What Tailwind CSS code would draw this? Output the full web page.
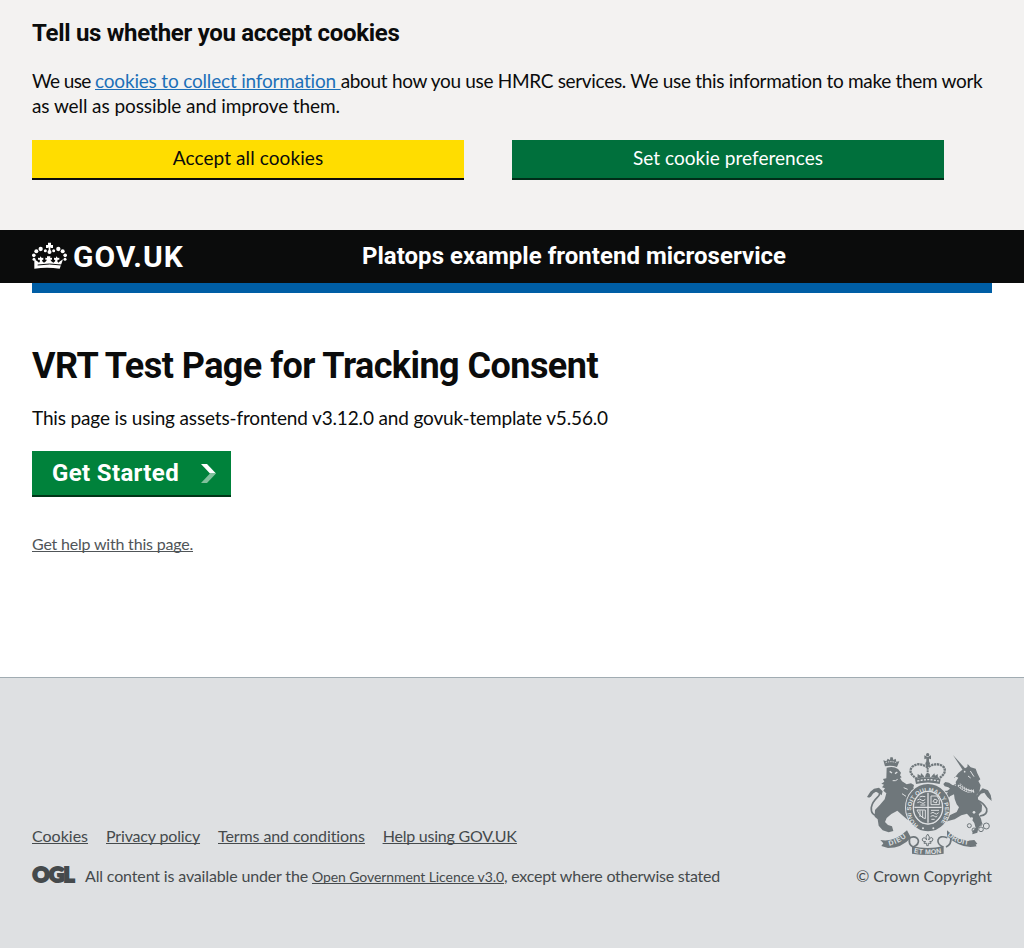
<!DOCTYPE html>
<html lang="en">
<head>
<meta charset="utf-8">
<title>VRT Test Page for Tracking Consent</title>
<script src="https://cdn.jsdelivr.net/npm/@tailwindcss/browser@4"></script>
</head>
<body class="flex h-[948px] flex-col bg-white font-['Lato','Noto_Sans',sans-serif] text-[19px] leading-[25px] text-[#0b0c0c]">
<section class="h-[230px] shrink-0 bg-[#f3f2f1] px-8 pt-[18px]">
  <h2 class="font-['Roboto',sans-serif] text-2xl leading-[30px] font-bold tracking-[-0.302px]">Tell us whether you accept cookies</h2>
  <p class="mt-5 whitespace-nowrap"><span class="tracking-[-0.603px]">We use </span><a href="#" class="tracking-[-0.179px] whitespace-pre text-[#1d70b8] underline decoration-1 underline-offset-[1px] [text-decoration-skip-ink:none]">cookies to collect information </a><span class="tracking-[-0.316px]">about how you use HMRC services. We use this information to make them work</span><br><span class="tracking-[-0.087px]">as well as possible and improve them.</span></p>
  <div class="mt-[22px] flex gap-12">
    <button class="h-10 w-[432px] border-b-2 border-[#0b0c0c] bg-[#ffdd00] pb-0.5 leading-[34px] tracking-[0.092px]">Accept all cookies</button>
    <button class="h-10 w-[432px] border-b-2 border-[#002d18] bg-[#00703c] pb-0.5 leading-[34px] tracking-[0.033px] text-white">Set cookie preferences</button>
  </div>
</section>
<header class="flex h-[53px] shrink-0 bg-[#0b0c0c] px-8 font-['Roboto',sans-serif] font-bold text-white">
  <div class="flex w-[330px]">
    <svg class="mt-3 h-[30px] w-[35px]" viewBox="12 12 105 90" fill="#fff">
      <path d="M60 14h9v7h6v9h-6l-2-2v12h-5V28l-2 2h-6v-9h6z"/>
      <circle cx="64.500" cy="42" r="6"/>
      <circle cx="52" cy="38" r="4.500"/><circle cx="77" cy="38" r="4.500"/>
      <circle cx="38" cy="33" r="6.500"/><circle cx="91" cy="33" r="6.500"/>
      <circle cx="25" cy="40" r="6"/><circle cx="104" cy="40" r="6"/>
      <circle cx="17.500" cy="52" r="5.500"/><circle cx="111.500" cy="52" r="5.500"/>
      <circle cx="18" cy="64" r="4.500"/><circle cx="111" cy="64" r="4.500"/>
      <path d="M19 64l9 6 5 4q5-5 2-9l-5 0v-6l5 1 3-5 3 5 5-1v6l-4 1q0 5 6 8 6-3 9-9h-5v-6l5 1v-5h10v5l5-1v6h-5q3 6 9 9 6-3 6-8l-4-1v-6l5 1 3-5 3 5 5-1v6l-5 0q-3 4 2 9l5-4 9-6-10 28q-38-6-76 0z"/>
      <path d="M29 81q35.500-6 71 0" fill="none" stroke="#0b0c0c" stroke-width="3"/>
    </svg>
    <a href="#" class="ml-1.5 text-[30px] leading-[53px] tracking-[1px]">GOV.UK</a>
  </div>
  <a href="#" class="text-2xl leading-[52px] tracking-[0.019px]">Platops example frontend microservice</a>
</header>
<div class="mx-8 h-[10px] shrink-0 bg-[#005ea5]"></div>
<main class="flex-1 px-8 pt-[53px]">
  <h1 class="font-['Roboto',sans-serif] text-4xl leading-10 font-bold tracking-[-0.553px]">VRT Test Page for Tracking Consent</h1>
  <p class="mt-[19px] tracking-[-0.15px]">This page is using assets-frontend v3.12.0 and govuk-template v5.56.0</p>
  <a href="#" class="mt-[21px] flex h-[46px] w-[199px] items-start border-b-2 border-[#003618] bg-[#00823b] pl-5 text-white">
    <span class="w-[149px] font-['Roboto',sans-serif] text-2xl leading-[44px] font-bold tracking-[0.352px]">Get Started</span>
    <svg class="mt-[13px] h-[19px] w-[15px]" viewBox="0 0 15 19"><path d="M0 0h6l9 9.500H9z" fill="#fff"/><path d="M0 19h6l9-9.500H9z" fill="#80c09c"/></svg>
  </a>
  <a href="#" class="mt-[37px] block w-fit text-base leading-5 tracking-[-0.197px] text-[#505558] underline decoration-1 underline-offset-[1px] [text-decoration-skip-ink:none]">Get help with this page.</a>
</main>
<footer class="flex h-[271px] shrink-0 justify-between border-t border-[#a1acb2] bg-[#dee0e2] px-8 text-base leading-5 text-[#454a4c]">
  <div class="pt-[148px]">
    <nav class="flex underline decoration-1 underline-offset-[1px] [text-decoration-skip-ink:none]">
      <a href="#" class="mr-[18px]">Cookies</a>
      <a href="#" class="mr-[18px] tracking-[-0.164px]">Privacy policy</a>
      <a href="#" class="mr-[18px] tracking-[-0.098px]">Terms and conditions</a>
      <a href="#" class="tracking-[-0.233px]">Help using GOV.UK</a>
    </nav>
    <div class="mt-5 flex">
      <svg class="mr-[10px] h-[18px] w-[43px] overflow-visible" viewBox="0 0 43 18"><text x="0.500" y="16" font-family="Lato" font-weight="900" font-size="21" fill="#454a4c" stroke="#454a4c" stroke-width="2" textLength="42" lengthAdjust="spacing">OGL</text></svg>
      <p class="whitespace-pre"><span class="tracking-[-0.149px]">All content is available under the </span><a href="#" class="text-sm leading-5 tracking-[-0.086px] underline decoration-1 underline-offset-[1px] [text-decoration-skip-ink:none]">Open Government Licence v3.0</a><span class="tracking-[-0.237px]">, except where otherwise stated</span></p>
    </div>
  </div>
  <div class="flex flex-col items-end pt-[75px]">
    <svg class="h-[102px] w-[125px]" viewBox="36 24 375 306" fill="#6f777b">
      <!-- lion -->
      <path d="M90 64l-5-18 9 3 4-8 7 4 1-8 7 0 2 8 7-4 2 9 9-1-7 17q-17-6-36-2z"/>
      <path d="M92 53q15-6 32 0" fill="none" stroke="#dee0e2" stroke-width="3" stroke-dasharray="4 3"/>
      <path d="M95 68q20-6 34 4l9 11-3 8 5 6-5 2 6 10 14 9 13-3 9 5-2 9 8 10-6 9 4 13-8 2-4-10-8-5-3 14 0 22 7 19 10 12 12 6 7 14-8 4-13-8-17-8-14-12-15-14-18 10-14 12-5 12 9 9 12 4 4 14-14 4-18-6-12-14-3-19-9-8 1-20 15-16 14-16 5-18-9-8 5-7-9-3 6-8-8-3 9-6-4-8 10-2z"/>
      <path d="M104 79l7 5M120 86l7-5" fill="none" stroke="#dee0e2" stroke-width="4"/>
      <path d="M113 107q9 2 15-4M146 128l12 5M141 146l12 8" fill="none" stroke="#dee0e2" stroke-width="3"/>
      <path d="M74 214Q46 212 49 187Q52 171 67 157Q80 145 68 138Q58 134 45 155" fill="none" stroke="#6f777b" stroke-width="5"/>
      <path d="M36 156l10-16 11-9 15-3 11 11-3 12-8-6-9-5-9 5-11 13z"/>
      <!-- royal crown -->
      <circle cx="218" cy="29" r="5"/><path d="M208 31l10 5 10-5v12l-10-4-10 4zM214 38h8v18h-8z"/><circle cx="218" cy="56" r="7"/>
      <path d="M187 102Q157 84 171 66Q190 49 218 67Q247 49 266 66Q278 84 249 102" fill="none" stroke="#6f777b" stroke-width="7" stroke-dasharray="7 2"/>
      <path d="M218 60v36" stroke="#6f777b" stroke-width="6" stroke-dasharray="6 2"/>
      <path d="M187 101l1-14 9 5 1-8 8 8 3 8 4-14h11l2 14 5-8 7-7 2 7 8-5 1 14q-31-8-63 0z"/>
      <path d="M180 103q38-12 77 0l-3 14q-36-9-71 0z"/><path d="M187 108q32-8 64 0" fill="none" stroke="#dee0e2" stroke-width="4" stroke-dasharray="6 4"/>
      <!-- unicorn -->
      <path d="M294 30l38 42-7 6z"/>
      <path d="M299 98l11-14 12-10 15-8 1-9 9 10 15 4 5 14 9 18-6 5 7 13-4 20-8 8 5 16 11 16-1 18-9 9 7 13 3 14-11 15-3 13-15 5 1-10 9-9-4-15-10-14-12-14-17 5-20 12-20 5-12 6-5-6 5-11 17-6 21-10 7-14-7-9-6-16-2-14-12 6-8 12 6 10-8 6-10-9 0-11 14-20-10 0-10 5-5 12-10 2-5-9 7-10 11-4 20-1 8-6-5-4-11-3-4-7 6-6 11 2 10 7 12 3-2-12 8-13-6-3-8 2-6-3z"/>
      <circle cx="329" cy="80" r="2.500" fill="#dee0e2"/>
      <path d="M346 78l11 17M339 93l8 6" fill="none" stroke="#dee0e2" stroke-width="3"/>
      <path d="M311 119q23 23 46 18" fill="none" stroke="#dee0e2" stroke-width="11"/><path d="M312 116q21 18 46 18M312 123q22 18 42 19" fill="none" stroke="#6f777b" stroke-width="4" stroke-dasharray="5 2"/>
      <path d="M375 213Q399 210 395 191Q386 174 367 166Q362 151 379 139Q399 133 407 161" fill="none" stroke="#6f777b" stroke-width="5"/>
      <path d="M369 144l14-14 16 6 8 14 3 18-13-12-9-13-10 3-9 11z"/>
      <g fill="none" stroke="#6f777b" stroke-width="3"><circle cx="343" cy="242" r="6"/><circle cx="357" cy="255" r="6"/><circle cx="378" cy="253" r="7"/><circle cx="394" cy="243" r="9"/><circle cx="376" cy="237" r="5"/><circle cx="365" cy="170" r="5"/><circle cx="373" cy="181" r="5"/><circle cx="301" cy="124" r="5"/></g>
      <circle cx="357" cy="202" r="4" fill="#dee0e2"/><circle cx="350" cy="221" r="4" fill="#dee0e2"/>
      <!-- garter and shield -->
      <ellipse cx="219" cy="188" rx="69" ry="74" fill="#dee0e2"/>
      <ellipse cx="219" cy="188" rx="56" ry="61" fill="none" stroke="#6f777b" stroke-width="20"/>
      <path id="garter" d="M190 241A51 55 0 1 1 248 241" fill="none"/>
      <text font-family="Liberation Sans" font-weight="700" font-size="18" fill="#dee0e2"><textPath href="#garter" textLength="258">HONI SOIT QUI MAL Y PENSE</textPath></text>
      <ellipse cx="219" cy="188" rx="45" ry="50" fill="#dee0e2"/>
      <ellipse cx="219" cy="188" rx="42" ry="47"/>
      <path d="M219 143v90M178 187h82" stroke="#dee0e2" stroke-width="4"/>
      <g fill="none" stroke="#dee0e2" stroke-width="3"><path d="M187 165q8-6 12 0t12-2M187 173q8-5 12 0t12-1M194 156q6-4 17-1M196 180h15M227 205q8-6 12 0t12-2M227 214q8-5 12 0t8-1M228 196h24M229 223h10"/><path d="M228 153l18 0 7 12v14h-25zM234 170l5-8 8 4-3 8zM186 195h25v26q-14-3-25-26zM195 196v20M203 196v23"/></g>
      <circle cx="204" cy="250" r="3" fill="#dee0e2"/><circle cx="235" cy="250" r="3" fill="#dee0e2"/>
      <!-- motto ribbon -->
      <path d="M76 285q42 8 80-29l12 22q-28 31-69 31l-20-6 6-8zM276 256q35 36 82 29l9 11-5 3 3 5q-44 11-89-30z"/>
      <path d="M165 277q-7 21 9 29M273 306q18-9 14-29M165 278q19-7 25 8 3 12-16 20M277 278q-23-8-28 7-2 13 15 21" fill="none" stroke="#6f777b" stroke-width="5"/>
      <path d="M171 303q47 12 95 0v23q-47 8-95 0z"/>
      <path d="M218 267q9 9 3 18 8-13 13-3 0 9-10 8 6 2 4 5h-8v7h-5v-7h-8q-1-4 5-5-12 0-10-8 5-9 13 3-6-9 3-18z" fill="none" stroke="#6f777b" stroke-width="3"/>
      <path id="dieu" d="M103 302Q137 295 160 270" fill="none"/><path id="mon" d="M176 323Q219 332 264 323" fill="none"/><path id="droit" d="M277 271Q306 299 348 300" fill="none"/>
      <g font-family="Liberation Sans" font-weight="700" font-size="21" fill="#dee0e2"><text><textPath href="#dieu" textLength="58">DIEU</textPath></text><text><textPath href="#mon" textLength="84">ET MON</textPath></text><text><textPath href="#droit" textLength="70">DROIT</textPath></text></g>
    </svg>
    <span class="mt-[11px] tracking-[-0.073px]">© Crown Copyright</span>
  </div>
</footer>
</body>
</html>
